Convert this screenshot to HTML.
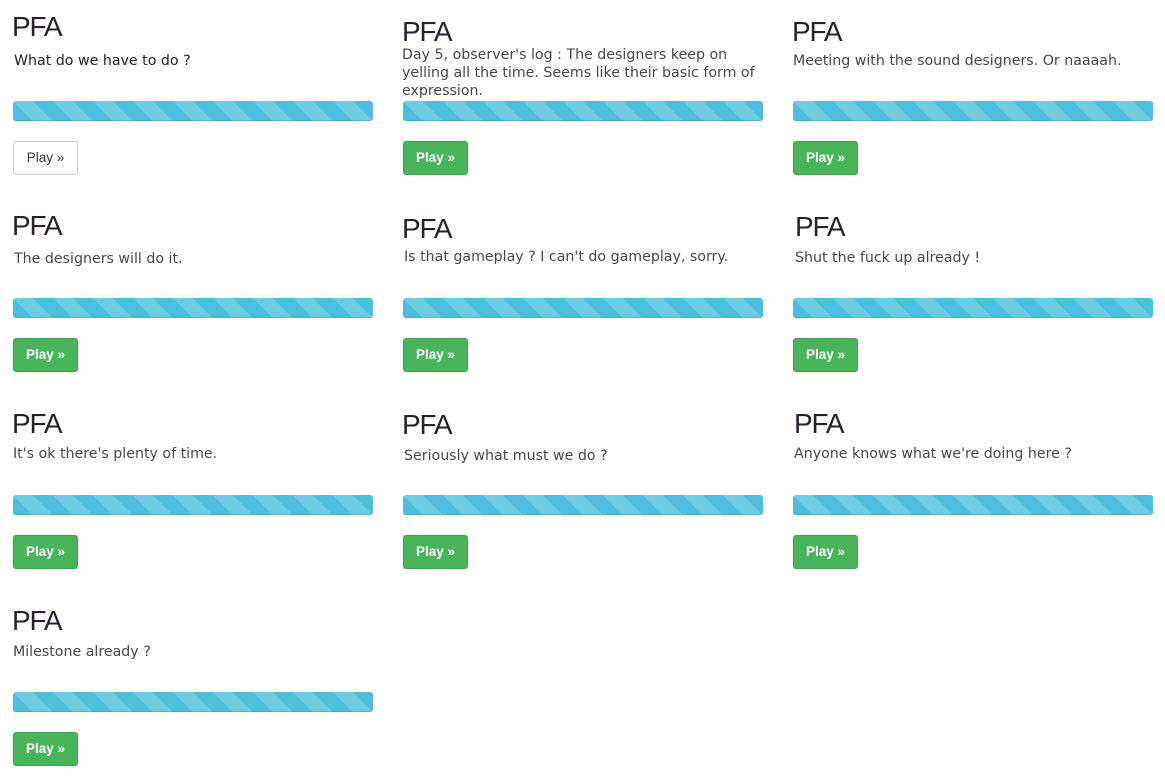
<!DOCTYPE html>
<html><head><meta charset="utf-8"><style>
html,body{margin:0;padding:0;background:#fff;width:1165px;height:777px;overflow:hidden;position:relative}
.h{position:absolute;font-family:"Liberation Sans",sans-serif;font-size:28px;line-height:30px;color:#2b1f2e;letter-spacing:-1.2px}
.t{position:absolute;font-family:"DejaVu Sans",sans-serif;font-size:14.2px;line-height:18px;color:#4a4548;width:362px}
.p{position:absolute;width:360px;height:20px;border-radius:3px;background-color:#4dbfdc;
background-image:linear-gradient(45deg,rgba(255,255,255,.18) 25%,transparent 25%,transparent 50%,rgba(255,255,255,.18) 50%,rgba(255,255,255,.18) 75%,transparent 75%,transparent);background-size:40px 40px;box-shadow:inset 0 -1px 0 rgba(0,0,0,.12)}
.b{position:absolute;width:63px;height:32px;border:1px solid #3ea34a;background:#48b55a;border-radius:3px;color:#fff;font-family:"Liberation Sans",sans-serif;font-size:13.5px;line-height:32px;text-align:center;font-weight:bold}
.b.w{background:#fff;border-color:#ccc;color:#333;font-weight:normal}
</style></head><body>
<div class="h" style="left:12px;top:12px">PFA</div>
<div class="t" style="left:14px;top:52px;color:#222">What do we have to do ?</div>
<div class="p" style="left:13px;top:101px"></div>
<div class="b w" style="left:13px;top:141px">Play »</div>

<div class="h" style="left:402px;top:17px">PFA</div>
<div class="t" style="left:402px;top:46px">Day 5, observer's log : The designers keep on yelling all the time. Seems like their basic form of expression.</div>
<div class="p" style="left:403px;top:101px"></div>
<div class="b" style="left:403px;top:141px">Play »</div>

<div class="h" style="left:792px;top:17px">PFA</div>
<div class="t" style="left:793px;top:52px">Meeting with the sound designers. Or naaaah.</div>
<div class="p" style="left:793px;top:101px"></div>
<div class="b" style="left:793px;top:141px">Play »</div>

<div class="h" style="left:12px;top:211px">PFA</div>
<div class="t" style="left:14px;top:250px">The designers will do it.</div>
<div class="p" style="left:13px;top:298px"></div>
<div class="b" style="left:13px;top:338px">Play »</div>

<div class="h" style="left:402px;top:214px">PFA</div>
<div class="t" style="left:404px;top:248px">Is that gameplay ? I can't do gameplay, sorry.</div>
<div class="p" style="left:403px;top:298px"></div>
<div class="b" style="left:403px;top:338px">Play »</div>

<div class="h" style="left:795px;top:212px">PFA</div>
<div class="t" style="left:795px;top:249px">Shut the fuck up already !</div>
<div class="p" style="left:793px;top:298px"></div>
<div class="b" style="left:793px;top:338px">Play »</div>

<div class="h" style="left:12px;top:409px">PFA</div>
<div class="t" style="left:13px;top:445px">It's ok there's plenty of time.</div>
<div class="p" style="left:13px;top:495px"></div>
<div class="b" style="left:13px;top:535px">Play »</div>

<div class="h" style="left:402px;top:410px">PFA</div>
<div class="t" style="left:404px;top:447px">Seriously what must we do ?</div>
<div class="p" style="left:403px;top:495px"></div>
<div class="b" style="left:403px;top:535px">Play »</div>

<div class="h" style="left:794px;top:409px">PFA</div>
<div class="t" style="left:794px;top:445px">Anyone knows what we're doing here ?</div>
<div class="p" style="left:793px;top:495px"></div>
<div class="b" style="left:793px;top:535px">Play »</div>

<div class="h" style="left:12px;top:606px">PFA</div>
<div class="t" style="left:13px;top:643px">Milestone already ?</div>
<div class="p" style="left:13px;top:692px"></div>
<div class="b" style="left:13px;top:732px">Play »</div>
</body></html>
